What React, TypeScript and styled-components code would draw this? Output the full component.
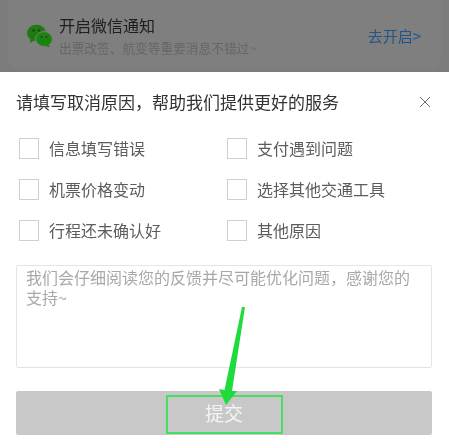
import styled, { createGlobalStyle } from 'styled-components';

const GlobalStyle = createGlobalStyle`
  html, body {
    margin: 0;
    padding: 0;
    background: #ffffff;
    font-family: "Noto Sans CJK SC", "Liberation Sans", sans-serif;
  }
`;

const reasons = [
  '信息填写错误',
  '支付遇到问题',
  '机票价格变动',
  '选择其他交通工具',
  '行程还未确认好',
  '其他原因'
];

const App = (): JSX.Element => {
  return (
    <>
      <GlobalStyle />
      <Page>
        <Backdrop>
          <NoticeCard>
            <WechatIcon viewBox="0 0 26 24">
              <ellipse cx="9.5" cy="9" rx="9.5" ry="8.2" fill="#1f7a12" />
              <path d="M3.5 14 L3 19 L8 16 Z" fill="#1f7a12" />
              <ellipse cx="17" cy="15" rx="8.4" ry="7.4" fill="#1b8210" stroke="#7f7f7f" strokeWidth="1" />
              <path d="M21 20 L23 23.5 L17.5 21.5 Z" fill="#1b8210" />
              <circle cx="6.5" cy="6.5" r="1.2" fill="#164a10" />
              <circle cx="12" cy="6.5" r="1.2" fill="#164a10" />
              <circle cx="14.5" cy="13" r="1" fill="#14500e" />
              <circle cx="19.5" cy="13" r="1" fill="#14500e" />
            </WechatIcon>
            <NoticeText>
              <NoticeTitle>开启微信通知</NoticeTitle>
              <NoticeSub>出票改签、航变等重要消息不错过~</NoticeSub>
            </NoticeText>
            <NoticeLink>去开启&gt;</NoticeLink>
          </NoticeCard>
        </Backdrop>
        <Sheet>
          <SheetHeader>
            <SheetTitle>请填写取消原因，帮助我们提供更好的服务</SheetTitle>
            <CloseIcon viewBox="0 0 12 12">
              <path d="M1 1 L11 11 M11 1 L1 11" stroke="#6e6e6e" strokeWidth="1" fill="none" />
            </CloseIcon>
          </SheetHeader>
          <ReasonGrid>
            {reasons.map((reason) => (
              <Reason key={reason}>
                <CheckBox />
                <ReasonLabel>{reason}</ReasonLabel>
              </Reason>
            ))}
          </ReasonGrid>
          <Feedback>我们会仔细阅读您的反馈并尽可能优化问题，感谢您的支持~</Feedback>
          <SubmitButton>提交</SubmitButton>
        </Sheet>
        <Highlight />
        <Arrow viewBox="0 0 449 447">
          <path d="M242 307 L245 307 L232 391 L237 391 L226 405 L219 389 L224.500 390 Z" fill="#1fdc3c" />
        </Arrow>
      </Page>
    </>
  );
};

export default App;

const Page = styled.div`
  position: relative;
  width: 449px;
  height: 447px;
  overflow: hidden;
  display: flex;
  flex-direction: column;
  background: #ffffff;
`;

const Backdrop = styled.div`
  height: 72px;
  flex: none;
  box-sizing: border-box;
  padding: 0 8px 3px;
  display: flex;
  background: #7c7c7c;
`;

const NoticeCard = styled.div`
  flex: 1;
  display: flex;
  align-items: center;
  box-sizing: border-box;
  padding: 0 20px 0 19px;
  background: #7f7f7f;
  border-radius: 0 0 10px 10px;
`;

const WechatIcon = styled.svg`
  width: 26px;
  height: 24px;
  margin: 2px 6px 0 0;
  flex: none;
  filter: blur(0.4px);
`;

const NoticeText = styled.div`
  flex: 1;
  display: flex;
  flex-direction: column;
  gap: 5px;
  margin-top: 2px;
`;

const NoticeTitle = styled.div`
  font-size: 16px;
  line-height: 20px;
  color: #1e1e1e;
  filter: blur(0.3px);
`;

const NoticeSub = styled.div`
  font-size: 12.700px;
  line-height: 16px;
  color: #666666;
  filter: blur(0.4px);
`;

const NoticeLink = styled.div`
  font-size: 15px;
  line-height: 20px;
  margin-top: 2px;
  color: #22548a;
  filter: blur(0.3px);
`;

const Sheet = styled.div`
  flex: 1;
  display: flex;
  flex-direction: column;
  padding: 0 17px 0 16px;
`;

const SheetHeader = styled.div`
  display: flex;
  align-items: center;
  justify-content: space-between;
  height: 24px;
  margin-top: 18px;
  padding: 0 1px 0 0;
`;

const SheetTitle = styled.div`
  font-size: 17px;
  line-height: 24px;
  color: #333333;
  white-space: nowrap;
  filter: blur(0.3px);
`;

const CloseIcon = styled.svg`
  width: 12px;
  height: 12px;
`;

const ReasonGrid = styled.div`
  display: grid;
  grid-template-columns: 208px 1fr;
  grid-auto-rows: 41px;
  margin-top: 14px;
  padding-left: 3px;
`;

const Reason = styled.div`
  display: flex;
  align-items: center;
  gap: 10px;
`;

const CheckBox = styled.span`
  box-sizing: border-box;
  width: 20px;
  height: 21px;
  border: 1px solid #cfcfcf;
  background: #ffffff;
`;

const ReasonLabel = styled.span`
  font-size: 16px;
  line-height: 22px;
  margin-top: -2px;
  color: #5c5c5c;
  filter: blur(0.3px);
`;

const Feedback = styled.div`
  box-sizing: border-box;
  height: 103px;
  margin-top: 14px;
  padding: 1px 20px 0 9px;
  border: 1px solid #e4e4e4;
  border-radius: 2px;
  font-size: 16px;
  line-height: 20px;
  color: #a8a8a8;
  filter: blur(0.3px);
`;

const SubmitButton = styled.div`
  height: 44px;
  box-sizing: border-box;
  padding-bottom: 1px;
  margin-top: 23px;
  display: flex;
  align-items: center;
  justify-content: center;
  border-radius: 2px;
  background: #c8c8c8;
  color: #f4f4f4;
  font-size: 19px;
  filter: blur(0.3px);
`;

const Highlight = styled.div`
  position: absolute;
  left: 166px;
  top: 395px;
  width: 117px;
  height: 39px;
  box-sizing: border-box;
  border: 2px solid #45e060;
`;

const Arrow = styled.svg`
  position: absolute;
  inset: 0;
  width: 449px;
  height: 447px;
  pointer-events: none;
`;
